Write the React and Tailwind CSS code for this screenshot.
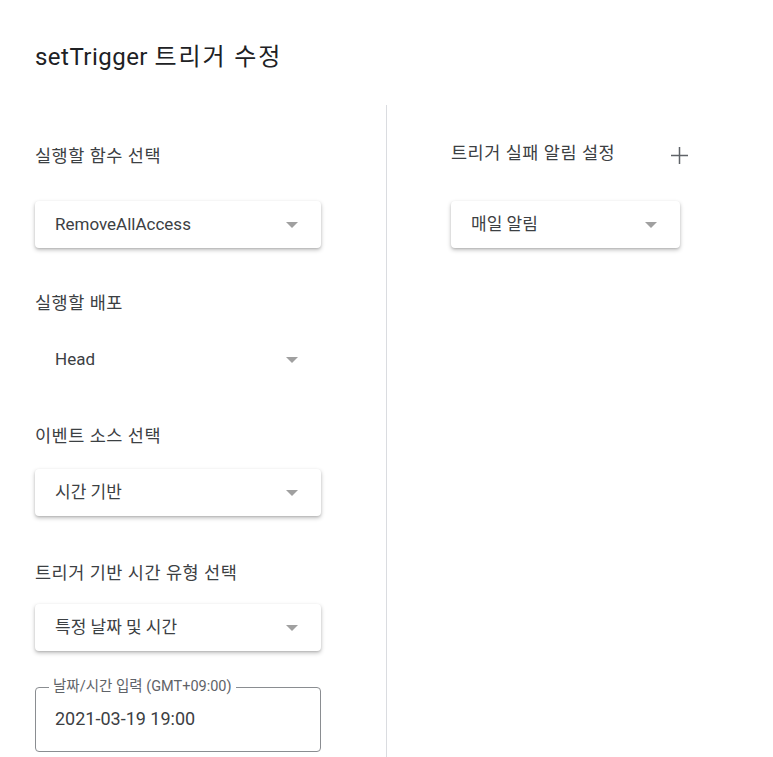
import React from "react";

const font = "font-['Roboto','Noto_Sans_CJK_KR',sans-serif]";

function Arrow() {
  return (
    <svg width="12" height="6" viewBox="0 0 12 6" className="shrink-0">
      <path d="M0 0 L12 0 L6 6 Z" fill="#a0a0a0" />
    </svg>
  );
}

function Label({ children, className = "" }) {
  return (
    <div className={`h-[22px] text-[17.5px] leading-[22px] tracking-[0.03em] text-[#3c4043] ${className}`}>
      {children}
    </div>
  );
}

function Select({ value, className = "", flat = false }) {
  return (
    <div
      className={`flex h-[47px] items-center justify-between rounded-[4px] bg-white pl-5 pr-[23px] text-[17px] text-[#3c4043] ${
        flat ? "" : "shadow-[0_2px_4px_rgba(0,0,0,0.25),0_1px_2px_rgba(0,0,0,0.1)]"
      } ${className}`}
    >
      <span>{value}</span>
      <Arrow />
    </div>
  );
}

export default function App() {
  return (
    <div className={`h-[757px] w-[773px] overflow-hidden bg-white ${font}`}>
      <div className="pl-[35px] pt-[41px] text-[24px] leading-[32px] tracking-[0.02em] text-[#202124]">
        setTrigger <span className="tracking-[0.08em]">트리거 수정</span>
      </div>

      <div className="mt-[32px] flex">
        {/* left column */}
        <div className="w-[386px] shrink-0 pl-[35px]">
          <div className="w-[286px]">
            <Label className="mt-[40px]">실행할 함수 선택</Label>
            <Select value="RemoveAllAccess" className="mt-[34px]" />

            <Label className="mt-[44px]">실행할 배포</Label>
            <Select value="Head" flat className="mt-[22px]" />

            <Label className="mt-[42px]">이벤트 소스 선택</Label>
            <Select value="시간 기반" className="mt-[22px]" />

            <Label className="mt-[46px]">트리거 기반 시간 유형 선택</Label>
            <Select value="특정 날짜 및 시간" className="mt-[20px]" />

            <fieldset className="mt-[28px] h-[73px] rounded-[4px] border border-[#8a8d91] pl-[19px]">
              <legend className="-ml-[6px] px-[4px] text-[14.5px] leading-[16px] text-[#5f6368]">
                날짜/시간 입력 (GMT+09:00)
              </legend>
              <div className="mt-[12px] text-[18px] leading-[24px] text-[#3c4043]">2021-03-19 19:00</div>
            </fieldset>
          </div>
        </div>

        {/* right column */}
        <div className="min-h-[652px] border-l border-[#dadce0] pl-[64px]">
          <div className="mt-[37px] flex w-[238px] items-center justify-between">
            <Label>트리거 실패 알림 설정</Label>
            <svg width="17" height="17" viewBox="0 0 17 17" className="mr-[1px] mt-[4px]">
              <path d="M8.5 0 V17 M0 8.5 H17" stroke="#5f6368" strokeWidth="1.5" />
            </svg>
          </div>
          <Select value="매일 알림" className="mt-[37px] w-[229px]" />
        </div>
      </div>
    </div>
  );
}
